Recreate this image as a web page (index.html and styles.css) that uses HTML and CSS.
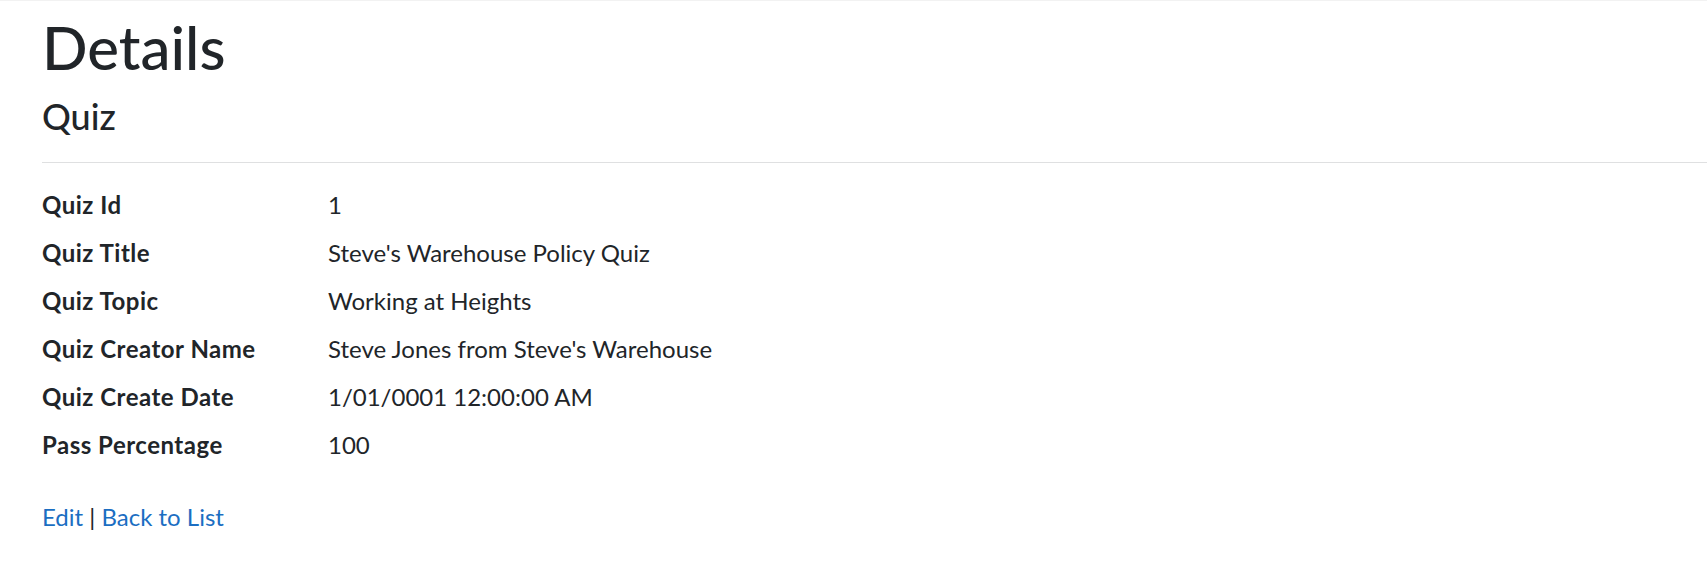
FILE: index.html
```html
<!DOCTYPE html>
<html lang="en">
<head>
<meta charset="utf-8">
<title>Details - Quiz</title>
<link rel="stylesheet" href="styles.css">
</head>
<body>
<main class="page">
  <h1 class="title">Details</h1>
  <div>
    <h4 class="subtitle">Quiz</h4>
    <hr class="rule">
    <dl class="details">
      <dt>Quiz Id</dt>
      <dd>1</dd>
      <dt>Quiz Title</dt>
      <dd>Steve's Warehouse Policy Quiz</dd>
      <dt>Quiz Topic</dt>
      <dd>Working at Heights</dd>
      <dt>Quiz Creator Name</dt>
      <dd>Steve Jones from Steve's Warehouse</dd>
      <dt>Quiz Create Date</dt>
      <dd>1/01/0001 12:00:00 AM</dd>
      <dt>Pass Percentage</dt>
      <dd>100</dd>
    </dl>
  </div>
  <div class="actions">
    <a href="#" class="link">Edit</a> | <a href="#" class="link">Back to List</a>
  </div>
</main>
</body>
</html>
```
FILE: styles.css
```css
html, body {
  margin: 0;
  padding: 0;
  background: #fff;
}
body {
  font-family: "Lato", "Noto Sans", sans-serif;
  font-size: 24px;
  line-height: 1.5;
  color: #212529;
  border-top: 1px solid #f2f2f2;
  overflow: hidden;
}
.page {
  padding: 0 0 0 42px;
}
.title {
  margin: 10px 0 12px 0;
  font-size: 60px;
  font-weight: 500;
  line-height: 1.2;
}
.subtitle {
  margin: 0 0 12px 0;
  font-size: 36px;
  font-weight: 500;
  line-height: 1.2;
}
.rule {
  margin: 24px 0;
  border: 0;
  border-top: 1px solid #dfe0e1;
  height: 0;
}
.details {
  display: grid;
  grid-template-columns: 286px 1fr;
  margin: 0 0 24px 0;
}
.details dt {
  font-weight: 700;
  letter-spacing: 0.5px;
  margin: 0 0 12px 0;
}
.details dd {
  margin: 0 0 12px 0;
}
.date {
  letter-spacing: -0.5px;
}
.actions {
  margin: 0;
}
.link {
  color: #1b6ec2;
  text-decoration: none;
}
```
